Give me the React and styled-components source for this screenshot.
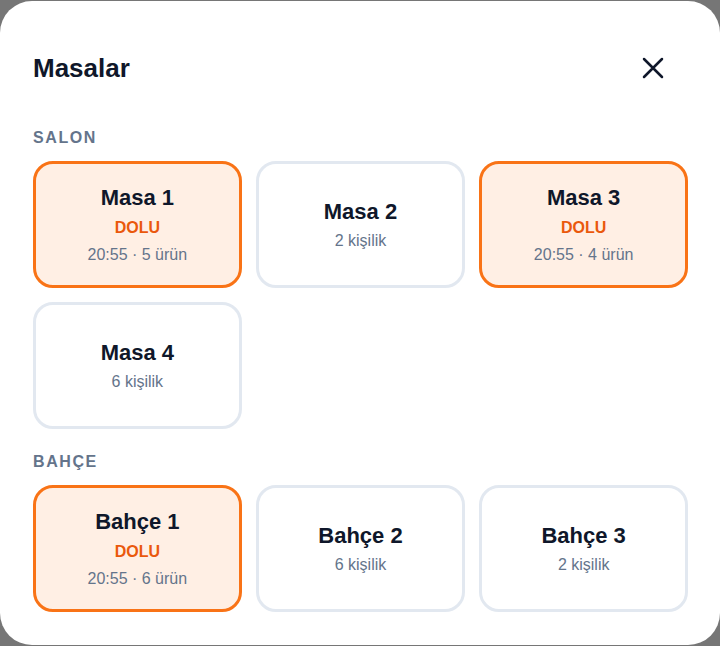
import React from 'react'
import styled, { createGlobalStyle } from 'styled-components'

const GlobalStyle = createGlobalStyle`
    html, body {
        margin: 0;
        padding: 0;
        height: 100%;
        background: #767676;
        font-family: "Liberation Sans", Arial, sans-serif;
    }
    * { box-sizing: border-box; }
`

const sections = [
    {
        name: 'Salon',
        tables: [
            { name: 'Masa 1', busy: true, time: '20:55', items: 5 },
            { name: 'Masa 2', seats: 2 },
            { name: 'Masa 3', busy: true, time: '20:55', items: 4 },
            { name: 'Masa 4', seats: 6 },
        ],
    },
    {
        name: 'Bahçe',
        tables: [
            { name: 'Bahçe 1', busy: true, time: '20:55', items: 6 },
            { name: 'Bahçe 2', seats: 6 },
            { name: 'Bahçe 3', seats: 2 },
        ],
    },
]

function CloseIcon() {
    return (
        <svg width="22" height="22" viewBox="0 0 22 22" fill="none">
            <path d="M2 2L20 20M20 2L2 20" stroke="#0f172a" strokeWidth="2.5" strokeLinecap="round" />
        </svg>
    )
}

function TableCard({ table }) {
    return (
        <Card busy={table.busy ? 1 : 0}>
            <CardTitle>{table.name}</CardTitle>
            {table.busy ? (
                <>
                    <Status>DOLU</Status>
                    <Meta>{table.time} · {table.items} ürün</Meta>
                </>
            ) : (
                <Seats>{table.seats} kişilik</Seats>
            )}
        </Card>
    )
}

export default function App() {
    return (
        <>
            <GlobalStyle />
            <Overlay>
                <Modal>
                    <Header>
                        <Title>Masalar</Title>
                        <CloseButton aria-label="Kapat">
                            <CloseIcon />
                        </CloseButton>
                    </Header>
                    {sections.map((s) => (
                        <Section key={s.name}>
                            <SectionLabel>{s.name.toLocaleUpperCase('tr')}</SectionLabel>
                            <Grid>
                                {s.tables.map((t) => (
                                    <TableCard key={t.name} table={t} />
                                ))}
                            </Grid>
                        </Section>
                    ))}
                </Modal>
            </Overlay>
        </>
    )
}

const Overlay = styled.div`
    height: 646px;
    display: flex;
    align-items: center;
    justify-content: center;
`

const Modal = styled.div`
    width: 720px;
    height: 644px;
    background: #fff;
    border-radius: 32px;
    padding: 33px 32px 32px 33px;
    display: flex;
    flex-direction: column;
`

const Header = styled.div`
    height: 68px;
    display: flex;
    align-items: center;
    justify-content: space-between;
    margin-bottom: 25px;
`

const Title = styled.h2`
    margin: 0;
    font-size: 26px;
    font-weight: 700;
    color: #0f172a;
`

const CloseButton = styled.button`
    width: 44px;
    height: 44px;
    margin-right: 13px;
    border: 0;
    background: transparent;
    padding: 0;
    display: flex;
    align-items: center;
    justify-content: center;
    cursor: pointer;
`

const Section = styled.div`
    & + & {
        margin-top: 22px;
    }
`

const SectionLabel = styled.div`
    font-size: 16px;
    line-height: 22px;
    font-weight: 700;
    letter-spacing: 0.1em;
    color: #64748b;
    margin-bottom: 12px;
`

const Grid = styled.div`
    display: grid;
    grid-template-columns: repeat(3, 1fr);
    gap: 14px 14.5px;
`

const Card = styled.div`
    height: 127px;
    border-radius: 20px;
    border: 3px solid ${(p) => (p.busy ? '#f97316' : '#e2e8f0')};
    background: ${(p) => (p.busy ? '#ffefe4' : '#ffffff')};
    display: flex;
    flex-direction: column;
    align-items: center;
    justify-content: center;
    text-align: center;
`

const CardTitle = styled.div`
    font-size: 22px;
    line-height: 30px;
    font-weight: 700;
    color: #0f172a;
`

const Status = styled.div`
    margin-top: 4px;
    font-size: 16px;
    line-height: 22px;
    font-weight: 700;
    color: #ea580c;
`

const Meta = styled.div`
    margin-top: 5px;
    font-size: 16px;
    line-height: 22px;
    color: #64748b;
`

const Seats = styled.div`
    margin-top: 3px;
    font-size: 16px;
    line-height: 22px;
    color: #64748b;
`
